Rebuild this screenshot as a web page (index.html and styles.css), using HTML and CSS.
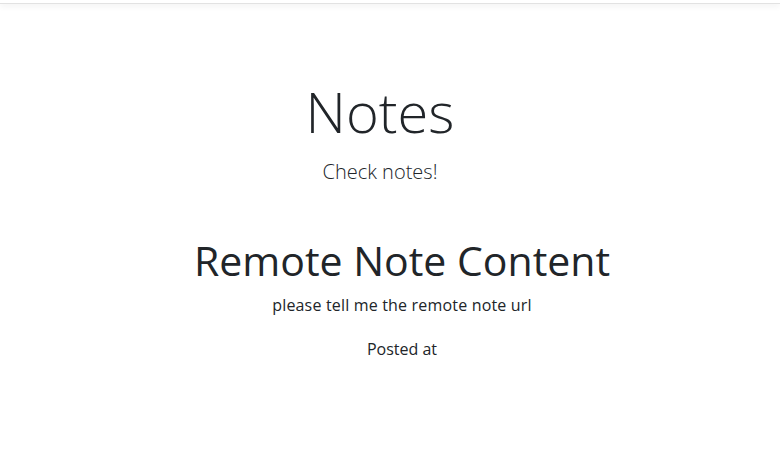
FILE: index.html
```html
<!DOCTYPE html>
<html lang="en">
<head>
<meta charset="utf-8">
<title>Notes</title>
<link rel="stylesheet" href="styles.css">
</head>
<body>
<header class="topbar"></header>
<main class="page">
  <section class="hero">
    <h1 class="display">Notes</h1>
    <p class="lead">Check notes!</p>
  </section>
  <section class="note">
    <h2 class="note-title">Remote Note Content</h2>
    <p class="note-body">please tell me the remote note url</p>
    <p class="note-meta">Posted at</p>
  </section>
</main>
</body>
</html>
```

FILE: styles.css
```css
* { box-sizing: border-box; }
html, body {
  margin: 0;
  padding: 0;
  background: #fff;
  color: #212529;
  font-family: "Open Sans", "Noto Sans", sans-serif;
}
.topbar {
  height: 4px;
  background: #fff;
  border-bottom: 1px solid #e2e2e2;
  box-shadow: 0 2px 6px rgba(0, 0, 0, 0.07);
}
.page {
  display: flex;
  flex-direction: column;
  align-items: center;
  text-align: center;
}
.hero {
  padding-top: 74px;
  padding-right: 20px;
}
.display {
  margin: 0;
  font-size: 56px;
  font-weight: 300;
  line-height: 1.2;
}
.lead {
  margin: 12px 0 0;
  font-size: 20px;
  font-weight: 300;
  line-height: 1.5;
}
.note {
  padding-top: 49px;
  padding-left: 24px;
}
.note-title {
  margin: 0;
  font-size: 41px;
  font-weight: 400;
  line-height: 1.2;
}
.note-body {
  margin: 8px 0 0;
  font-size: 16px;
  letter-spacing: 0.18px;
  line-height: 1.5;
}
.note-meta {
  margin: 20px 0 0;
  font-size: 16px;
  line-height: 1.5;
}
```
